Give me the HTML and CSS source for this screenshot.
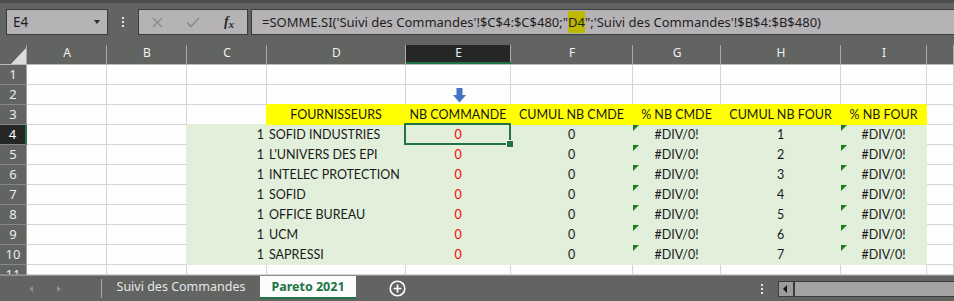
FILE: index.html
```html
<!DOCTYPE html>
<html lang="fr">
<head>
<meta charset="utf-8">
<title>Pareto 2021</title>
<link rel="stylesheet" href="styles.css">
</head>
<body>
<div class="app">
  <header class="topbar">
    <div class="namebox"><span>E4</span><span class="caret"></span></div>
    <div class="vdots"><i></i><i></i><i></i></div>
    <div class="fxbox">
      <span class="fbtn"><svg width="11" height="11" viewBox="0 0 11 11"><path d="M1 1L10 10M10 1L1 10" stroke="#8d8d8d" stroke-width="1.5" fill="none"/></svg></span>
      <span class="fbtn"><svg width="14" height="11" viewBox="0 0 14 11"><path d="M1 5.5L5 9.5L13 1" stroke="#8d8d8d" stroke-width="1.8" fill="none"/></svg></span>
      <span class="fbtn fx"><i>f</i><i class="x">x</i></span>
    </div>
    <div class="formula">=SOMME.SI('Suivi des Commandes'!$C$4:$C$480;"<span class="hl">D4</span>";'Suivi des Commandes'!$B$4:$B$480)</div>
  </header>

  <main class="sheet">
    <div class="ch corner"><svg width="15" height="16" viewBox="0 0 15 16"><polygon points="15,0 15,16 0,16" fill="#dcdcdc"/></svg></div>
    <div class="ch">A</div><div class="ch">B</div><div class="ch">C</div><div class="ch">D</div><div class="ch on">E</div><div class="ch">F</div><div class="ch">G</div><div class="ch">H</div><div class="ch">I</div><div class="ch"></div>

    <div class="rh">1</div>
    <div class="c"></div><div class="c"></div><div class="c"></div><div class="c"></div><div class="c"></div><div class="c"></div><div class="c"></div><div class="c"></div><div class="c"></div><div class="c"></div>

    <div class="rh">2</div>
    <div class="c"></div><div class="c"></div><div class="c"></div>
    <div class="c by"></div>
    <div class="c by arrow"><svg width="13" height="15" viewBox="0 0 13 15"><rect x="3.5" y="0" width="6" height="8" fill="#4472c4"/><polygon points="0,7 13,7 6.5,14.5" fill="#4472c4"/></svg></div>
    <div class="c by"></div><div class="c by"></div><div class="c by"></div><div class="c by"></div>
    <div class="c"></div>

    <div class="rh">3</div>
    <div class="c"></div><div class="c"></div><div class="c bry bbg"></div>
    <div class="c y m">FOURNISSEURS</div>
    <div class="c y m">NB COMMANDE</div>
    <div class="c y m">CUMUL NB CMDE</div>
    <div class="c y m">% NB CMDE</div>
    <div class="c y m">CUMUL NB FOUR</div>
    <div class="c y m">% NB FOUR</div>
    <div class="c"></div>

    <div class="rh on">4</div>
    <div class="c"></div><div class="c brg"></div>
    <div class="c g r">1</div><div class="c g l">SOFID INDUSTRIES</div>
    <div class="c g m red sel">0</div><div class="c g m">0</div><div class="c g m err">#DIV/0!</div><div class="c g m">1</div><div class="c g m err">#DIV/0!</div>
    <div class="c"></div>

    <div class="rh">5</div>
    <div class="c"></div><div class="c brg"></div>
    <div class="c g r">1</div><div class="c g l">L'UNIVERS DES EPI</div>
    <div class="c g m red">0</div><div class="c g m">0</div><div class="c g m err">#DIV/0!</div><div class="c g m">2</div><div class="c g m err">#DIV/0!</div>
    <div class="c"></div>

    <div class="rh">6</div>
    <div class="c"></div><div class="c brg"></div>
    <div class="c g r">1</div><div class="c g l">INTELEC PROTECTION</div>
    <div class="c g m red">0</div><div class="c g m">0</div><div class="c g m err">#DIV/0!</div><div class="c g m">3</div><div class="c g m err">#DIV/0!</div>
    <div class="c"></div>

    <div class="rh">7</div>
    <div class="c"></div><div class="c brg"></div>
    <div class="c g r">1</div><div class="c g l">SOFID</div>
    <div class="c g m red">0</div><div class="c g m">0</div><div class="c g m err">#DIV/0!</div><div class="c g m">4</div><div class="c g m err">#DIV/0!</div>
    <div class="c"></div>

    <div class="rh">8</div>
    <div class="c"></div><div class="c brg"></div>
    <div class="c g r">1</div><div class="c g l">OFFICE BUREAU</div>
    <div class="c g m red">0</div><div class="c g m">0</div><div class="c g m err">#DIV/0!</div><div class="c g m">5</div><div class="c g m err">#DIV/0!</div>
    <div class="c"></div>

    <div class="rh">9</div>
    <div class="c"></div><div class="c brg"></div>
    <div class="c g r">1</div><div class="c g l">UCM</div>
    <div class="c g m red">0</div><div class="c g m">0</div><div class="c g m err">#DIV/0!</div><div class="c g m">6</div><div class="c g m err">#DIV/0!</div>
    <div class="c"></div>

    <div class="rh">10</div>
    <div class="c"></div><div class="c brg"></div>
    <div class="c g r">1</div><div class="c g l">SAPRESSI</div>
    <div class="c g m red">0</div><div class="c g m">0</div><div class="c g m err">#DIV/0!</div><div class="c g m">7</div><div class="c g m err">#DIV/0!</div>
    <div class="c"></div>

    <div class="rh">11</div>
    <div class="c"></div><div class="c"></div><div class="c"></div><div class="c"></div><div class="c"></div><div class="c"></div><div class="c"></div><div class="c"></div><div class="c"></div><div class="c"></div>
  </main>

  <footer class="tabbar">
    <div class="nav"><span class="tl"></span><span class="tr"></span></div>
    <div class="sep"></div>
    <div class="tab">Suivi des Commandes</div>
    <div class="tab active">Pareto 2021</div>
    <div class="add"><svg width="17" height="17" viewBox="0 0 17 17"><circle cx="8.5" cy="8.5" r="7.3" stroke="#fff" stroke-width="1.6" fill="none"/><path d="M8.5 4.6V12.4M4.6 8.5H12.4" stroke="#fff" stroke-width="1.7"/></svg></div>
    <div class="hdots"><i></i><i></i><i></i></div>
    <div class="hscroll"><span class="sbtn"><span class="stri"></span></span><span class="track"></span></div>
  </footer>
</div>
</body>
</html>
```

FILE: styles.css
```css
* { box-sizing: border-box; margin: 0; padding: 0; }
html, body { width: 954px; height: 301px; overflow: hidden; background: #616461; }

.app {
  display: flex;
  flex-direction: column;
  width: 954px;
  height: 301px;
  font-family: "Noto Sans", "Open Sans", sans-serif;
}

/* ---------- formula bar ---------- */
.topbar {
  height: 36px;
  flex: none;
  display: flex;
  align-items: flex-start;
  border-top: 3px solid #4b4d4b;
  padding: 6px 0 0 6px;
  background: #616461;
}
.namebox {
  width: 102px;
  height: 26px;
  border: 1px solid #3b3c3b;
  background: #b6b3b6;
  display: flex;
  align-items: center;
  justify-content: space-between;
  padding: 0 7px 0 6px;
  font-size: 13.5px;
  color: #1e1e1e;
}
.caret {
  width: 0; height: 0;
  border-left: 3.5px solid transparent;
  border-right: 3.5px solid transparent;
  border-top: 4px solid #2a2a2a;
}
.vdots {
  margin: 8px 0 0 14px;
  display: flex;
  flex-direction: column;
  gap: 2px;
}
.vdots i, .hdots i { display: block; width: 2px; height: 2px; background: #e4e4e4; }
.fxbox {
  margin-left: 14px;
  width: 110px;
  height: 26px;
  border: 1px solid #3b3c3b;
  background: #b6b3b6;
  display: flex;
}
.fbtn {
  width: 36px;
  display: flex;
  align-items: center;
  justify-content: center;
}
.fx {
  font-family: "Liberation Serif", serif;
  font-style: italic;
  font-weight: bold;
  color: #2b2b2b;
  font-size: 14px;
}
.fx i { font-style: italic; }
.fx .x { font-size: 11px; margin-top: 4px; }
.formula {
  flex: 1;
  margin-left: 3px;
  height: 26px;
  border: 1px solid #3b3c3b;
  border-right: none;
  background: #b6b3b6;
  padding-left: 10px;
  font-size: 13px;
  line-height: 24px;
  color: #1e1e1e;
  white-space: nowrap;
  overflow: hidden;
}
.hl { background: #bdb900; padding: 2px 0; }

/* ---------- sheet ---------- */
.sheet {
  flex: none;
  display: grid;
  grid-template-columns: 27px 80px 80px 80px 139px 105px 122px 88px 120px 86px 1fr;
  grid-template-rows: 29px repeat(10, 20px) 10px;
  background: #fdfefd;
  overflow: hidden;
  font-family: Lato, "Liberation Sans", sans-serif;
  font-size: 12.5px;
  color: #1a1a1a;
}
.ch {
  background: linear-gradient(#a9aba9, #a9aba9) right bottom / 1px 19px no-repeat, #616461;
  border-bottom: 1px solid #b9bbb9;
  display: flex;
  align-items: flex-end;
  justify-content: center;
  padding-bottom: 3px;
  font-family: "Noto Sans", "Open Sans", sans-serif;
  font-size: 12px;
  line-height: 16px;
  color: #f0f0f0;
}
.ch.on {
  background:
    linear-gradient(#217346, #217346) left bottom / 100% 2px no-repeat,
    linear-gradient(#a9aba9, #a9aba9) right bottom / 1px 19px no-repeat,
    linear-gradient(#252725, #252725) left bottom / 100% 19px no-repeat,
    #616461;
}
.ch.corner { justify-content: flex-end; padding: 0 1px 0 0; }
.ch.corner svg { display: block; }

.rh {
  background: #616461;
  border-right: 1px solid #9fa19f;
  border-bottom: 1px solid #868886;
  text-align: center;
  font-family: "Noto Sans", "Open Sans", sans-serif;
  font-size: 13px;
  line-height: 19px;
  color: #ececec;
  overflow: hidden;
}
.rh.on { background: #252725; border-right: 2px solid #217346; color: #fff; }

.c {
  border-right: 1px solid #d5d5d5;
  border-bottom: 1px solid #d5d5d5;
  line-height: 19px;
  padding: 0 2px;
  white-space: nowrap;
  overflow: hidden;
}
.y { background: #ffff00; border-color: #ffff00; }
.g { background: #e2efda; border-color: #e2efda; }
.by { border-bottom-color: #ffff00; }
.bry { border-right-color: #ffff00; }
.bbg { border-bottom-color: #e2efda; }
.brg { border-right-color: #e2efda; }
.m { text-align: center; }
.r { text-align: right; }
.l { text-align: left; }
.red { color: #ff0000; }

.arrow { display: flex; align-items: flex-start; padding: 3px 0 0 47px; }
.arrow svg { display: block; }

.err { position: relative; }
.err::before {
  content: "";
  position: absolute;
  left: 0;
  top: 0;
  border-top: 6px solid #197d19;
  border-right: 6px solid transparent;
}
.sel { position: relative; overflow: visible; }
.sel::after {
  content: "";
  position: absolute;
  left: -2px; top: -2px; right: -1px; bottom: -1px;
  border: 2px solid #217346;
  z-index: 2;
}
.sel::before {
  content: "";
  position: absolute;
  right: -3px; bottom: -3px;
  width: 6px; height: 6px;
  background: #217346;
  border-left: 1px solid #fff;
  border-top: 1px solid #fff;
  z-index: 3;
}

/* ---------- sheet tabs ---------- */
.tabbar {
  flex: 1;
  display: flex;
  align-items: center;
  border-top: 1px solid #8f918f;
  background: #616461;
  font-size: 12.5px;
}
.nav { width: 101px; display: flex; align-items: center; padding-left: 29px; }
.tl, .tr { width: 0; height: 0; border-top: 3px solid transparent; border-bottom: 3px solid transparent; }
.tl { border-right: 4px solid #8e908e; }
.tr { border-left: 4px solid #8e908e; margin-left: 24px; }
.sep { width: 1px; height: 19px; background: #a3a5a3; }
.tab {
  align-self: flex-start;
  height: 23px;
  line-height: 21px;
  width: 158px;
  text-align: center;
  color: #e6e6e6;
  white-space: nowrap;
}
.tab.active {
  width: 96px;
  background: #fbfcfb;
  border-bottom: 2px solid #217346;
  color: #217346;
  font-weight: bold;
}
.add { margin-left: 33px; display: flex; }
.add svg { display: block; }
.hdots { margin-left: auto; margin-right: 15px; display: flex; flex-direction: column; gap: 2px; }
.hscroll {
  align-self: flex-start;
  margin-top: 5px;
  width: 176px;
  height: 16px;
  border: 1px solid #3a3b3a;
  border-right: none;
  display: flex;
  background: #a4a2a5;
}
.sbtn {
  width: 16px;
  border-right: 2px solid #3a3b3a;
  background: #9d9b9e;
  display: flex;
  align-items: center;
  padding-left: 4px;
}
.stri { width: 0; height: 0; border-top: 4px solid transparent; border-bottom: 4px solid transparent; border-right: 4px solid #151515; }
.track { flex: 1; }
```
